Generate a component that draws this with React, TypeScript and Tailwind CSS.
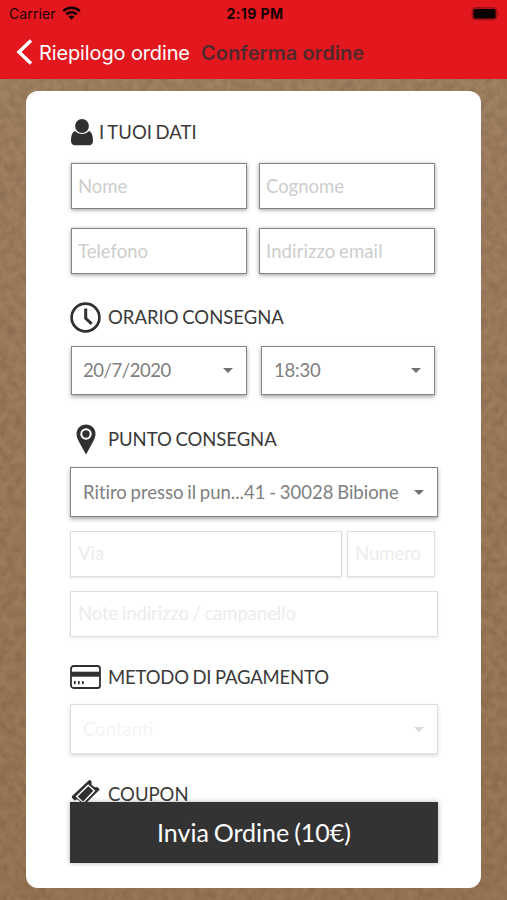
import type { ReactNode } from 'react'
import { clsx } from 'clsx'

function WifiIcon() {
  return (
    <svg width="19" height="15" viewBox="0 0 19 15" fill="none" stroke="#100203" strokeWidth="2.5">
      <path d="M1.2 5.2a11.8 11.8 0 0 1 16.6 0" />
      <path d="M4.3 8.4a7.4 7.4 0 0 1 10.4 0" />
      <path d="M9.5 13.7 6.5 10.7a4.2 4.2 0 0 1 6 0z" fill="#100203" stroke="none" />
    </svg>
  )
}

function BatteryIcon() {
  return (
    <svg width="30" height="14" viewBox="0 0 30 14">
      <rect x="1" y="0.6" width="25" height="12.2" rx="3.6" fill="#b0141a" stroke="#9a1217" strokeWidth="1" />
      <rect x="2.4" y="2" width="22.2" height="9.4" rx="2" fill="#080001" />
      <path d="M27.4 5v3.6c1.4-.6 1.4-3 0-3.6z" fill="#8f1015" />
    </svg>
  )
}

function PersonIcon() {
  return (
    <svg width="22" height="27" viewBox="0 0 22 27" fill="#303030">
      <path d="M4 12C1.4 12.8.1 16.4 0 21.6c0 3.3 1.4 4.7 4 4.7h14c2.6 0 4-1.4 4-4.7-.1-5.2-1.4-8.8-4-9.6-1.9 2-4.3 2.9-7 2.9S5.9 14 4 12z" />
      <circle cx="11" cy="7" r="6.9" />
    </svg>
  )
}

function ClockIcon() {
  return (
    <svg width="31" height="31" viewBox="0 0 31 31" fill="none" stroke="#303030">
      <circle cx="15.5" cy="15.5" r="13.9" strokeWidth="2.7" />
      <path d="M15.7 6.5v9.8l6 5.5" strokeWidth="3" />
    </svg>
  )
}

function PinIcon() {
  return (
    <svg width="20" height="31" viewBox="0 0 20 31">
      <path d="M10 .5C4.7.5.5 4.6.5 9.9c0 2.8 1.2 5.4 2.6 8.1L10 30.5 16.9 18c1.4-2.7 2.6-5.3 2.6-8.1C19.5 4.6 15.3.5 10 .5z" fill="#303030" />
      <circle cx="10" cy="10" r="4.7" fill="#303030" stroke="#fff" strokeWidth="2" />
    </svg>
  )
}

function CreditCardIcon() {
  return (
    <svg width="31" height="24" viewBox="0 0 31 24">
      <rect x="1" y="1" width="29" height="22" rx="2.6" fill="none" stroke="#303030" strokeWidth="1.8" />
      <path d="M1 6.7h29v5H1z" fill="#303030" />
      <path d="M4.8 16v3.3M8.8 16v3.3M12.8 16v3.3" stroke="#303030" strokeWidth="1.7" />
    </svg>
  )
}

function TicketIcon() {
  return (
    <svg width="29" height="29" viewBox="0 0 30 30">
      <path
        d="M18.2.5a1.5 1.5 0 0 1 2.1 0l1.3 1.5a3.2 3.2 0 0 0 1.6 4.5 3.2 3.2 0 0 0 3.6.8l2.2 1.5c.6.6.6 1.3 0 1.9L12 27.5c-.6.6-1.5.6-2.1 0l-1.5-1.5a3.3 3.3 0 0 0-4.7-4.7l-2.5-2.8c-.6-.6-.6-1.4 0-2z"
        fill="#303030"
      />
      <path d="m17.8 5.5 6.3 5.7L12.6 23.2 5.9 17z" fill="#303030" stroke="#fff" strokeWidth="1.5" />
    </svg>
  )
}

// Kraft paper grain behind the card
function PaperTexture() {
  return (
    <svg className="absolute inset-0 h-full w-full" aria-hidden="true">
      <defs>
        <linearGradient id="paper" x1="0" y1="0" x2="0" y2="1">
          <stop offset="0" stopColor="#a18765" />
          <stop offset="0.15" stopColor="#9f7f60" />
          <stop offset="1" stopColor="#987555" />
        </linearGradient>
        <filter id="grain" x="0" y="0" width="100%" height="100%" colorInterpolationFilters="sRGB">
          <feTurbulence type="fractalNoise" baseFrequency="0.13 0.11" numOctaves="5" seed="21" />
          <feColorMatrix values="0 0 0 0 0.25  0 0 0 0 0.15  0 0 0 0 0.07  0.34 0 0 0 -0.11" />
        </filter>
      </defs>
      <rect width="100%" height="100%" fill="url(#paper)" />
      <rect width="100%" height="100%" filter="url(#grain)" />
    </svg>
  )
}

function Heading({ icon, className, children }: { icon: ReactNode; className?: string; children: ReactNode }) {
  return (
    <h2 className={clsx('flex h-8 items-center text-[18.5px] text-[#3a3a3a]', className)}>
      <span className="mr-[7px] flex w-[31px] shrink-0 justify-center">{icon}</span>
      <span className="pt-0.5">{children}</span>
    </h2>
  )
}

function Field({ label, className, disabled }: { label: string; className?: string; disabled?: boolean }) {
  return (
    <div
      className={clsx(
        'flex h-[46px] items-center border bg-white text-[18.5px] whitespace-nowrap',
        disabled
          ? 'border-[#dfdfdf] pl-[7px] text-[#ececec] shadow-[0_1px_3px_rgba(0,0,0,0.1)]'
          : 'border-[#858585] pt-px pl-[6px] text-[#cdcdcd] shadow-[0_1px_4px_rgba(0,0,0,0.4)]',
        className,
      )}
    >
      {label}
    </div>
  )
}

function Select({ value, className, disabled }: { value: string; className?: string; disabled?: boolean }) {
  return (
    <div
      className={clsx(
        'flex items-center justify-between border bg-white pr-[13px] text-[18.5px] whitespace-nowrap',
        disabled
          ? 'border-[#dedede] text-[#f4f4f4] shadow-[0_2px_4px_rgba(0,0,0,0.14)]'
          : 'border-[#858585] text-[#808080] shadow-[0_2px_4px_rgba(0,0,0,0.35)]',
        className,
      )}
    >
      {value}
      <svg width="10" height="5" viewBox="0 0 10 5" className={disabled ? 'text-[#d9d9d9]' : 'text-[#707070]'}>
        <path d="M0 0h10L5 5z" fill="currentColor" />
      </svg>
    </div>
  )
}

export default function App() {
  return (
    <div className="relative flex h-[900px] w-[507px] flex-col overflow-hidden font-['Lato',sans-serif] [font-variant-ligatures:none]">
      <PaperTexture />

      <header className="relative h-[79px] shrink-0 bg-[#e3171e] font-['Inter',sans-serif]">
        <div className="grid h-[27px] grid-cols-3 items-center pr-[6px] pl-[9px] text-[14px] text-[#220305]">
          <div className="flex items-center gap-[6px]">
            <span className="tracking-[0.1px]">Carrier</span>
            <WifiIcon />
          </div>
          <span className="text-center font-bold tracking-[0.4px] text-[#140203]">2:19 PM</span>
          <div className="flex justify-end">
            <BatteryIcon />
          </div>
        </div>
        <div className="flex h-[50px] items-center pl-4 text-[20px] whitespace-nowrap">
          <svg width="17" height="26" viewBox="0 0 17 26" fill="none" stroke="#fff" strokeWidth="3.5">
            <path d="M15 1.5 3 13l12 11.5" />
          </svg>
          <span className="ml-[6px] w-[162px] pt-px tracking-[-0.13px] text-white">Riepilogo ordine</span>
          <span className="pt-px font-semibold tracking-[0.05px] text-[#50292c]">Conferma ordine</span>
        </div>
      </header>

      <main className="relative mx-[26px] mt-3 flex h-[797px] flex-col rounded-[12px] bg-white pl-11">
        <div className="-ml-11 h-[711px] overflow-hidden pt-[25px] pl-11 [word-spacing:-1px]">
          <h2 className="ml-px flex h-8 items-center gap-[6px] text-[18.5px] text-[#3a3a3a]">
            <PersonIcon />
            <span className="pt-px">I TUOI DATI</span>
          </h2>
          <div className="mt-[15px] ml-px flex gap-3">
            <Field label="Nome" className="w-[176px]" />
            <Field label="Cognome" className="w-[176px]" />
          </div>
          <div className="mt-[19px] ml-px flex gap-3">
            <Field label="Telefono" className="w-[176px]" />
            <Field label="Indirizzo email" className="w-[176px] tracking-[0.1px]" />
          </div>

          <Heading icon={<ClockIcon />} className="mt-[27px]">ORARIO CONSEGNA</Heading>
          <div className="mt-[13px] ml-px flex gap-[14px]">
            <Select value="20/7/2020" className="h-[49px] w-[176px] pl-[11px] tracking-[-0.45px]" />
            <Select value="18:30" className="h-[49px] w-[174px] pl-3 tracking-[-0.2px]" />
          </div>

          <Heading icon={<PinIcon />} className="mt-7 tracking-[-0.05px]">PUNTO CONSEGNA</Heading>
          <Select value="Ritiro presso il pun...41 - 30028 Bibione" className="mt-3 h-[50px] w-[368px] pt-px pl-3" />
          <div className="mt-[14px] flex gap-[5px]">
            <Field label="Via" className="w-[272px]" disabled />
            <Field label="Numero" className="w-[88px]" disabled />
          </div>
          <Field label="Note indirizzo / campanello" className="mt-[14px] w-[368px] tracking-[-0.08px]" disabled />

          <Heading icon={<CreditCardIcon />} className="mt-6 tracking-[-0.17px]">METODO DI PAGAMENTO</Heading>
          <Select value="Contanti" className="mt-[11px] h-[50px] w-[368px] pt-px pl-3" disabled />

          <Heading icon={<TicketIcon />} className="mt-6">COUPON</Heading>
        </div>

        <button className="h-[61px] w-[368px] bg-[#333] text-[25px] text-white shadow-[0_0_5px_rgba(0,0,0,0.3)] [word-spacing:-1.5px]">
          Invia Ordine (10€)
        </button>
      </main>
    </div>
  )
}
